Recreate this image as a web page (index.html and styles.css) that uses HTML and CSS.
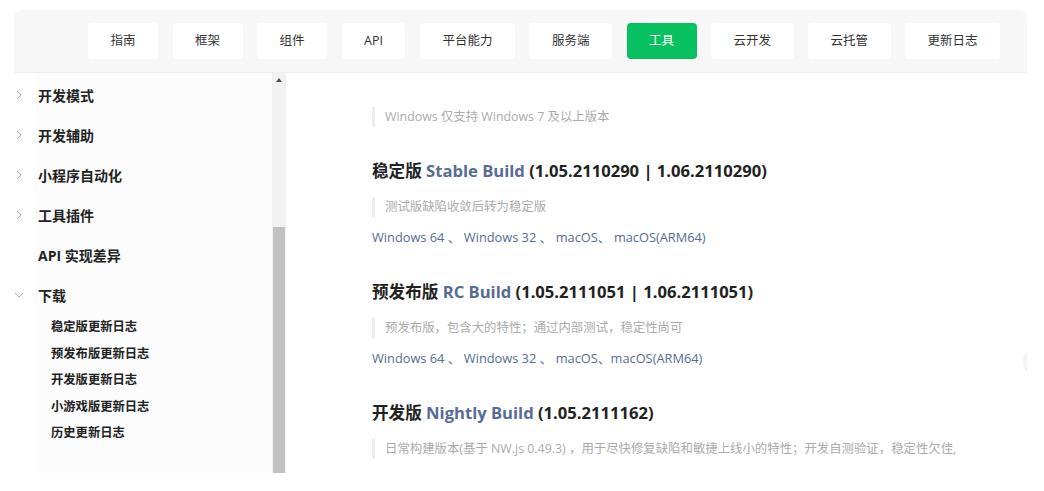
FILE: index.html
```html
<!DOCTYPE html>
<html lang="zh-CN">
<head>
<meta charset="utf-8">
<title>工具 - 下载</title>
<link rel="stylesheet" href="styles.css">
</head>
<body>
<div class="page">
  <nav class="topnav">
    <a class="nav-btn">指南</a>
    <a class="nav-btn">框架</a>
    <a class="nav-btn">组件</a>
    <a class="nav-btn">API</a>
    <a class="nav-btn">平台能力</a>
    <a class="nav-btn">服务端</a>
    <a class="nav-btn active">工具</a>
    <a class="nav-btn">云开发</a>
    <a class="nav-btn">云托管</a>
    <a class="nav-btn">更新日志</a>
  </nav>
  <div class="layout">
    <aside class="sidebar">
      <ul class="menu">
        <li class="menu-item"><svg class="chev" viewBox="0 0 10 10"><polyline points="3,1 7,5 3,9"/></svg><span>开发模式</span></li>
        <li class="menu-item"><svg class="chev" viewBox="0 0 10 10"><polyline points="3,1 7,5 3,9"/></svg><span>开发辅助</span></li>
        <li class="menu-item"><svg class="chev" viewBox="0 0 10 10"><polyline points="3,1 7,5 3,9"/></svg><span>小程序自动化</span></li>
        <li class="menu-item"><svg class="chev" viewBox="0 0 10 10"><polyline points="3,1 7,5 3,9"/></svg><span>工具插件</span></li>
        <li class="menu-item"><span class="chev-space"></span><span>API 实现差异</span></li>
        <li class="menu-item"><svg class="chev" viewBox="0 0 10 10"><polyline points="1,3 5,7 9,3"/></svg><span>下载</span></li>
      </ul>
      <ul class="submenu">
        <li>稳定版更新日志</li>
        <li>预发布版更新日志</li>
        <li>开发版更新日志</li>
        <li>小游戏版更新日志</li>
        <li>历史更新日志</li>
      </ul>
    </aside>
    <div class="scrollbar">
      <span class="scroll-up"></span>
      <span class="scroll-thumb"></span>
    </div>
    <main class="content">
      <blockquote class="note first">Windows 仅支持 Windows 7 及以上版本</blockquote>

      <h2 class="build-title">稳定版 <a class="link">Stable Build</a> (1.05.2110290 | 1.06.2110290)</h2>
      <blockquote class="note">测试版缺陷收敛后转为稳定版</blockquote>
      <p class="downloads"><a class="link">Windows 64</a> 、 <a class="link">Windows 32</a> 、 <a class="link">macOS</a>、 <a class="link">macOS(ARM64)</a></p>

      <h2 class="build-title">预发布版 <a class="link">RC Build</a> (1.05.2111051 | 1.06.2111051)</h2>
      <blockquote class="note">预发布版，包含大的特性；通过内部测试，稳定性尚可</blockquote>
      <p class="downloads"><a class="link">Windows 64</a> 、 <a class="link">Windows 32</a> 、 <a class="link">macOS</a>、<a class="link">macOS(ARM64)</a></p>

      <h2 class="build-title">开发版 <a class="link">Nightly Build</a> (1.05.2111162)</h2>
      <blockquote class="note">日常构建版本(基于 NW.js 0.49.3) ，用于尽快修复缺陷和敏捷上线小的特性；开发自测验证，稳定性欠佳,</blockquote>

      <span class="float-btn"></span>
    </main>
  </div>
</div>
</body>
</html>
```

FILE: styles.css
```css
html, body {
  margin: 0;
  padding: 0;
  background: #ffffff;
}

body {
  font-family: "Open Sans", "Noto Sans CJK SC", sans-serif;
  color: #222;
  overflow: hidden;
  height: 491px;
}

.page {
  padding: 10px 17px 0 14px;
}

.topnav {
  height: 62px;
  background: #f7f7f7;
  border-radius: 8px 8px 0 0;
  border-bottom: 1px solid #eeeeee;
  display: flex;
  align-items: center;
  gap: 14.5px;
  padding-left: 74px;
}

.nav-btn {
  height: 36px;
  line-height: 36px;
  padding: 0 22.5px;
  background: #ffffff;
  border-radius: 4px;
  font-size: 12.5px;
  color: #333;
  text-decoration: none;
  white-space: nowrap;
}

.nav-btn.active {
  background: #07c160;
  color: #ffffff;
}

.layout {
  display: flex;
  height: 400px;
}

.sidebar {
  width: 258px;
  background: linear-gradient(to right, #ffffff 21px, #fcfcfc 21px);
  padding-top: 2px;
}

.menu, .submenu {
  list-style: none;
  margin: 0;
  padding: 0;
}

.menu-item {
  display: flex;
  align-items: center;
  height: 40px;
  font-size: 14px;
  font-weight: bold;
  color: #222;
}

.chev, .chev-space {
  width: 10px;
  height: 10px;
  margin-left: 0;
  margin-right: 14px;
  flex: none;
}

.chev polyline {
  fill: none;
  stroke: #b0b0b0;
  stroke-width: 1;
}

.submenu {
  margin-top: -1px;
  padding-left: 37px;
}

.submenu li {
  height: 26.6px;
  line-height: 26.6px;
  font-size: 12.3px;
  font-weight: bold;
  color: #222;
}

.scrollbar {
  position: relative;
  width: 14px;
  background: #f1f1f1;
}

.scroll-up {
  position: absolute;
  top: 5px;
  left: 3.5px;
  width: 0;
  height: 0;
  border-left: 3.5px solid transparent;
  border-right: 3.5px solid transparent;
  border-bottom: 4px solid #505050;
}

.scroll-thumb {
  position: absolute;
  top: 154px;
  bottom: 0;
  left: 1px;
  right: 1px;
  background: #c1c1c1;
}

.content {
  position: relative;
  flex: 1;
  overflow: hidden;
  padding: 34px 0 0 86px;
}

.note {
  margin: 14px 0 0 0;
  padding-left: 10px;
  border-left: 3px solid #eeeeee;
  font-size: 12.4px;
  line-height: 20px;
  color: #ababab;
  white-space: nowrap;
}

.note.first {
  margin-top: 0;
}

.build-title {
  margin: 33px 0 0 0;
  font-size: 16.6px;
  line-height: 24px;
  font-weight: bold;
  color: #222;
  white-space: nowrap;
}

.note.first + .build-title {
  margin-top: 32px;
}

.link {
  color: #576b95;
  text-decoration: none;
}

.downloads {
  margin: 10px 0 0 0;
  font-size: 12.8px;
  line-height: 20px;
  color: #576b95;
  white-space: nowrap;
}

.float-btn {
  position: absolute;
  top: 272px;
  right: -28px;
  width: 32px;
  height: 32px;
  border-radius: 50%;
  background: #f4f4f4;
}
```
